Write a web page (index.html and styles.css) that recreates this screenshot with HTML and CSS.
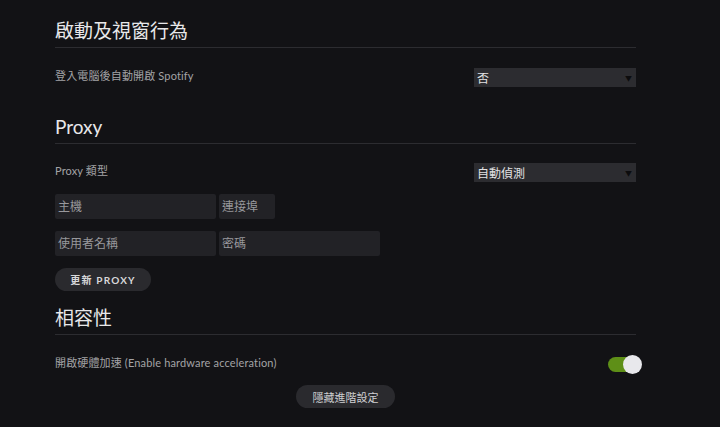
FILE: index.html
```html
<!DOCTYPE html>
<html lang="zh-Hant">
<head>
<meta charset="utf-8">
<link rel="stylesheet" href="styles.css">
</head>
<body>
<div class="page">
  <section class="section first">
    <h2 class="heading">啟動及視窗行為</h2>
    <div class="row row-select">
      <span class="label">登入電腦後自動開啟 Spotify</span>
      <div class="select"><span>否</span><span class="arrow">▼</span></div>
    </div>
  </section>

  <section class="section proxy">
    <h2 class="heading">Proxy</h2>
    <div class="row row-select row-proxy">
      <span class="label">Proxy 類型</span>
      <div class="select"><span>自動偵測</span><span class="arrow">▼</span></div>
    </div>
    <div class="inputs">
      <div class="input wide">主機</div>
      <div class="input narrow">連接埠</div>
    </div>
    <div class="inputs">
      <div class="input wide">使用者名稱</div>
      <div class="input wide">密碼</div>
    </div>
    <button class="pill update">更新 PROXY</button>
  </section>

  <section class="section compat">
    <h2 class="heading">相容性</h2>
    <div class="row row-toggle">
      <span class="label">開啟硬體加速 (Enable hardware acceleration)</span>
      <div class="toggle"><span class="knob"></span></div>
    </div>
    <div class="center">
      <button class="pill hide">隱藏進階設定</button>
    </div>
  </section>
</div>
</body>
</html>
```
FILE: styles.css
```css
* { box-sizing: border-box; }
html, body {
  margin: 0;
  padding: 0;
  background: #121215;
  height: 100%;
}
body {
  font-family: Lato, "Noto Sans CJK TC", sans-serif;
  color: #a3a3a6;
  overflow: hidden;
}
.page {
  width: 581px;
  margin-left: 55px;
  padding-top: 17px;
}
.heading {
  margin: 0;
  font-size: 19px;
  font-weight: 400;
  line-height: 28px;
  height: 31px;
  padding-bottom: 2px;
  border-bottom: 1px solid #2c2c30;
  color: #e8e8ea;
}
.proxy { margin-top: 26px; }
.compat { margin-top: 13px; }
.row {
  display: flex;
  justify-content: space-between;
  align-items: center;
}
.row-select { margin-top: 20px; }
.row-proxy { margin-top: 19px; }
.label {
  font-size: 11px;
  line-height: 15px;
  letter-spacing: 0.15px;
  color: #a3a3a6;
  position: relative;
  top: -2px;
}
.select {
  width: 162px;
  height: 19px;
  background: #2c2c30;
  display: flex;
  justify-content: space-between;
  align-items: center;
  padding: 0 4px 0 3px;
  font-size: 12px;
  color: #e2e2e4;
}
.arrow {
  font-size: 7px;
  color: #0c0c0e;
}
.inputs {
  display: flex;
  gap: 3px;
  margin-top: 12px;
}
.input {
  height: 25px;
  background: #222226;
  border-radius: 2px;
  font-size: 12px;
  line-height: 25px;
  padding-left: 3px;
  color: #98989c;
}
.wide { width: 161px; }
.narrow { width: 56px; }
.pill {
  border: 0;
  border-radius: 12px;
  background: #2a2a2e;
  color: #d8d8da;
  font-family: Lato, "Noto Sans CJK TC", sans-serif;
  height: 23px;
  padding: 0;
  cursor: pointer;
}
.update {
  margin-top: 12px;
  width: 96px;
  font-size: 10px;
  font-weight: 700;
  letter-spacing: 1.2px;
}
.row-toggle { margin-top: 20px; }
.toggle {
  width: 34px;
  height: 19px;
  position: relative;
  margin-right: -6px;
}
.toggle::before {
  content: "";
  position: absolute;
  left: 0;
  right: 2px;
  top: 2px;
  height: 15px;
  border-radius: 8px;
  background: #5e8f17;
}
.knob {
  position: absolute;
  right: 0;
  top: 0;
  width: 19px;
  height: 19px;
  border-radius: 50%;
  background: #e8e8ec;
}
.center {
  display: flex;
  justify-content: center;
  margin-top: 11px;
}
.hide {
  width: 99px;
  font-size: 11px;
  color: #cfcfd2;
}
```
